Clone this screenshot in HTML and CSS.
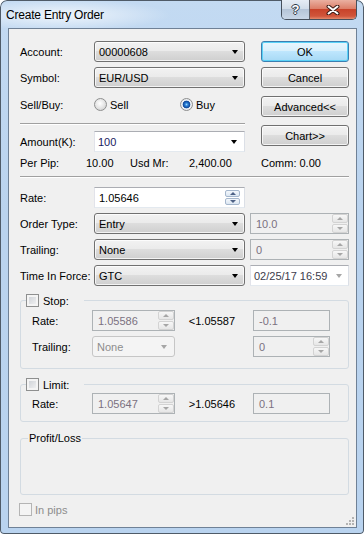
FILE: index.html
```html
<!DOCTYPE html>
<html lang="en">

<head>
    <meta charset="UTF-8" />
    <title>Create Entry Order</title>
    <link rel="stylesheet" href="styles.css">
</head>

<body>
    <div class="window">
        <div class="titlebar">
            <span class="title">Create Entry Order</span>
            <div class="caption">
                <div class="cap help">?</div>
                <div class="cap close">
                    <svg width="14" height="10" viewBox="0 0 14 10">
                        <path d="M2.5 1.5 L11.5 8.5 M11.5 1.5 L2.5 8.5" stroke="#3b1d17" stroke-width="4" stroke-linecap="round" />
                        <path d="M2.5 1.5 L11.5 8.5 M11.5 1.5 L2.5 8.5" stroke="#fff" stroke-width="2" stroke-linecap="round" />
                    </svg>
                </div>
            </div>
        </div>

        <div class="client">
            <div class="top">
                <div class="left">
                    <div class="row">
                        <span class="lbl">Account:</span>
                        <div class="combo"><span>00000608</span><i class="arrow"></i></div>
                    </div>
                    <div class="row gap5">
                        <span class="lbl">Symbol:</span>
                        <div class="combo"><span>EUR/USD</span><i class="arrow"></i></div>
                    </div>
                    <div class="row gap6">
                        <span class="lbl">Sell/Buy:</span>
                        <label class="radio sell"><i class="dot"></i>Sell</label>
                        <label class="radio"><i class="dot on"></i>Buy</label>
                    </div>
                    <div class="sep short"></div>
                    <div class="row gap6">
                        <span class="lbl">Amount(K):</span>
                        <div class="edit combo-edit"><span>100</span><i class="arrow"></i></div>
                    </div>
                </div>
                <div class="buttons">
                    <div class="btn default">OK</div>
                    <div class="btn gap5">Cancel</div>
                    <div class="btn gap8">Advanced&lt;&lt;</div>
                    <div class="btn gap8">Chart&gt;&gt;</div>
                </div>
            </div>

            <div class="pips">
                <span>Per Pip:</span>
                <span>10.00</span>
                <span>Usd Mr:</span>
                <span>2,400.00</span>
                <span>Comm: 0.00</span>
            </div>
            <div class="sep"></div>

            <div class="fields">
                <div class="row">
                    <span class="lbl">Rate:</span>
                    <div class="edit rate">
                        <span>1.05646</span>
                        <div class="spin inset"><b><i class="up"></i></b><b><i class="down"></i></b></div>
                    </div>
                </div>
                <div class="row">
                    <span class="lbl">Order Type:</span>
                    <div class="combo"><span>Entry</span><i class="arrow"></i></div>
                    <div class="edit off side">
                        <span>10.0</span>
                        <div class="spin"><b><i class="up"></i></b><b><i class="down"></i></b></div>
                    </div>
                </div>
                <div class="row">
                    <span class="lbl">Trailing:</span>
                    <div class="combo"><span>None</span><i class="arrow"></i></div>
                    <div class="edit off side">
                        <span>0</span>
                        <div class="spin"><b><i class="up"></i></b><b><i class="down"></i></b></div>
                    </div>
                </div>
                <div class="row">
                    <span class="lbl">Time In Force:</span>
                    <div class="combo"><span>GTC</span><i class="arrow"></i></div>
                    <div class="edit side date"><span>02/25/17 16:59</span><i class="arrow grey"></i></div>
                </div>
            </div>

            <fieldset class="group stop">
                <legend class="check-legend"><i class="chk"></i>Stop:</legend>
                <div class="grow">
                    <span>Rate:</span>
                    <div class="edit off small">
                        <span>1.05586</span>
                        <div class="spin"><b><i class="up"></i></b><b><i class="down"></i></b></div>
                    </div>
                    <span class="cmp">&lt;1.05587</span>
                    <div class="edit off small"><span>-0.1</span></div>
                </div>
                <div class="grow gap5">
                    <span>Trailing:</span>
                    <div class="combo-off"><span>None</span><i class="arrow grey"></i></div>
                    <span></span>
                    <div class="edit off small">
                        <span>0</span>
                        <div class="spin"><b><i class="up"></i></b><b><i class="down"></i></b></div>
                    </div>
                </div>
            </fieldset>

            <fieldset class="group limit">
                <legend class="check-legend"><i class="chk"></i>Limit:</legend>
                <div class="grow">
                    <span>Rate:</span>
                    <div class="edit off small">
                        <span>1.05647</span>
                        <div class="spin"><b><i class="up"></i></b><b><i class="down"></i></b></div>
                    </div>
                    <span class="cmp">&gt;1.05646</span>
                    <div class="edit off small"><span>0.1</span></div>
                </div>
            </fieldset>

            <fieldset class="group pl">
                <legend class="pl-legend">Profit/Loss</legend>
                <div class="pl-body"></div>
            </fieldset>

            <label class="inpips"><i class="chk dis"></i>In pips</label>

            <svg class="grip" width="9" height="9" viewBox="0 0 9 9">
                <rect x="7" y="1" width="2" height="2" fill="#b3b3b3" />
                <rect x="4" y="4" width="2" height="2" fill="#b3b3b3" />
                <rect x="7" y="4" width="2" height="2" fill="#b3b3b3" />
                <rect x="1" y="7" width="2" height="2" fill="#b3b3b3" />
                <rect x="4" y="7" width="2" height="2" fill="#b3b3b3" />
                <rect x="7" y="7" width="2" height="2" fill="#b3b3b3" />
            </svg>
        </div>
    </div>
</body>

</html>
```

FILE: styles.css
```css
* {
    margin: 0;
    padding: 0;
    box-sizing: border-box;
}

body {
    font-family: "Liberation Sans", Arial, sans-serif;
    font-size: 11px;
    color: #000;
    background: #fff;
}

/* Window frame */
.window {
    width: 364px;
    height: 534px;
    display: flex;
    flex-direction: column;
    border-radius: 7px 7px 4px 4px;
    background:
        radial-gradient(ellipse 110px 16px at 60px 15px, rgba(255, 255, 255, 0.75), rgba(255, 255, 255, 0) 100%),
        linear-gradient(#c3daf2, #bad3ee 40%, #b9d3ef);
    box-shadow: inset 0 0 0 1px #4f5b68;
}

.titlebar {
    height: 28px;
    display: flex;
    justify-content: space-between;
    align-items: flex-start;
    padding: 0 7px 0 6px;
}

.title {
    margin-top: 8px;
    font-size: 12px;
    line-height: 14px;
    letter-spacing: -0.2px;
}

.caption {
    display: flex;
    height: 20px;
    border: 1px solid #46505c;
    border-top: none;
    border-radius: 0 0 5px 5px;
    overflow: hidden;
}

.cap {
    height: 19px;
    display: flex;
    align-items: center;
    justify-content: center;
}

.help {
    width: 28px;
    border-right: 1px solid #5d5f66;
    background: linear-gradient(#e6edf5, #d2dde9 45%, #b5c5d8 50%, #c9d7e7);
    color: #fff;
    font-weight: bold;
    font-size: 13px;
    text-shadow: 1px 0 0 #2e3a48, -1px 0 0 #2e3a48, 0 1px 0 #2e3a48, 0 -1px 0 #2e3a48;
}

.close {
    width: 46px;
    background: linear-gradient(#eab0a1, #dc7f69 45%, #c8432a 50%, #d0553b 85%, #e48a6c);
}

/* Client area */
.client {
    flex: 1;
    position: relative;
    margin: 0 7px 6px 8px;
    border: 1px solid #6f8196;
    background: #f0f0f0;
    padding: 12px 7px 0 11px;
}

.top {
    display: flex;
    gap: 16px;
}

.left {
    width: 225px;
}

.buttons {
    width: 88px;
    display: flex;
    flex-direction: column;
}

.row {
    display: flex;
    align-items: center;
    height: 21px;
}

.gap5 {
    margin-top: 5px;
}

.gap6 {
    margin-top: 6px;
}

.gap8 {
    margin-top: 8px;
}

.lbl {
    width: 74px;
    flex-shrink: 0;
}

/* Buttons */
.btn {
    height: 21px;
    display: flex;
    align-items: center;
    justify-content: center;
    border: 1px solid #707070;
    border-radius: 3px;
    background: linear-gradient(#f2f2f2, #ebebeb 45%, #dddddd 50%, #cfcfcf);
    box-shadow: inset 0 0 0 1px rgba(255, 255, 255, 0.75);
}

.btn.default {
    border-color: #3c7fb1;
    background: linear-gradient(#eaf6fd, #d9f0fc 45%, #bee6fd 50%, #a7d9f5);
    box-shadow: inset 0 0 0 1px #5ad2f7;
}

/* Combo boxes */
.combo {
    width: 151px;
    height: 21px;
    flex-shrink: 0;
    display: flex;
    align-items: center;
    justify-content: space-between;
    padding: 0 6px 0 4px;
    border: 1px solid #707070;
    border-radius: 3px;
    background: linear-gradient(#f2f2f2, #ebebeb 45%, #dddddd 50%, #cfcfcf);
    box-shadow: inset 0 0 0 1px rgba(255, 255, 255, 0.75);
}

.arrow {
    width: 0;
    height: 0;
    border-left: 3.5px solid transparent;
    border-right: 3.5px solid transparent;
    border-top: 4px solid #000;
}

.arrow.grey {
    border-top-color: #a6a6a6;
}

/* Edit boxes */
.edit {
    height: 21px;
    flex-shrink: 0;
    display: flex;
    align-items: center;
    justify-content: space-between;
    padding-left: 4px;
    border: 1px solid;
    border-color: #abadb3 #dbdfe6 #e3e9ef #e2e3ea;
    background: #fff;
}

.combo-edit {
    width: 151px;
    padding: 0 7px 0 3px;
    color: #1a1a60;
}

.rate {
    width: 151px;
    padding-right: 4px;
}

.side {
    width: 99px;
    margin-left: 5px;
}

.edit.off {
    background: #f0f0f0;
    border-color: #adb2b5;
    color: #7b7080;
    padding-left: 5px;
}

.edit.small {
    width: 83px;
}

.grow .edit.small:last-child {
    width: 77px;
}

.date {
    color: #3c3c4c;
    padding: 0 6px 0 3px;
}

/* Spin buttons */
.spin {
    align-self: stretch;
    width: 16px;
    display: flex;
    flex-direction: column;
    gap: 1px;
}

.spin b {
    flex: 1;
    display: flex;
    align-items: center;
    justify-content: center;
    border: 1px solid #d3d3d3;
    border-radius: 2px;
    background: linear-gradient(#f7f7f7, #e6e6e6);
}

.spin.inset {
    align-self: center;
    width: 15px;
    height: 15px;
}

.spin.inset b {
    border-color: #a5b7cd;
    background: linear-gradient(#f4f8fc, #dbe6f2);
}

.up,
.down {
    width: 0;
    height: 0;
    border-left: 3px solid transparent;
    border-right: 3px solid transparent;
}

.up {
    border-bottom: 3px solid #a6a6a6;
}

.down {
    border-top: 3px solid #a6a6a6;
}

.inset .up {
    border-bottom-color: #4d6185;
}

.inset .down {
    border-top-color: #4d6185;
}

/* Radios */
.radio {
    display: flex;
    align-items: center;
    gap: 3px;
}

.radio.sell {
    width: 86px;
}

.dot {
    width: 13px;
    height: 13px;
    border-radius: 50%;
    border: 1px solid #8e8f8f;
    background: radial-gradient(circle at 45% 40%, #ffffff, #e8e8e8 45%, #c9c9c9);
}

.dot.on {
    background: radial-gradient(circle at 50% 50%, #9ad8fa 0, #2b7fd8 1.5px, #0d4596 3.5px, #eef1f5 4.2px, #d9dde2);
}

/* Separators */
.sep {
    height: 2px;
    border-top: 1px solid #a0a0a0;
    border-bottom: 1px solid #fff;
}

.sep.short {
    margin-top: 8px;
    width: 225px;
}

.pips {
    display: grid;
    grid-template-columns: 66px 44px 59px 72px auto;
    align-items: center;
    height: 22px;
}

.pips + .sep {
    margin-top: 2px;
}

.fields {
    margin-top: 9px;
    display: flex;
    flex-direction: column;
    gap: 5px;
}

/* Group boxes */
.group {
    border: 1px solid #d3dbe2;
    border-radius: 3px;
    padding: 3px 0 11px 11px;
    margin-top: 8px;
}

.limit {
    margin-top: 9px;
    padding: 2px 0 7px 11px;
}

.pl {
    margin-top: 10px;
    padding: 0 0 0 11px;
}

.pl-body {
    height: 49px;
}

.check-legend {
    display: flex;
    align-items: center;
    gap: 4px;
    height: 13px;
    width: 58px;
    margin-left: -6px;
}

.pl-legend {
    height: 13px;
    line-height: 13px;
    padding: 0 1px;
    margin-left: -4px;
}

.chk {
    width: 13px;
    height: 13px;
    flex-shrink: 0;
    border: 1px solid #8e8f8f;
    background: linear-gradient(135deg, #c9cdd3, #f6f6f6);
    box-shadow: inset 0 0 0 2px #f4f4f4;
}

.chk.dis {
    border-color: #b4b4b4;
    background: #f4f4f4;
    box-shadow: none;
}

.grow {
    display: grid;
    grid-template-columns: 60px 83px 78px 77px;
    align-items: center;
    height: 21px;
}

.cmp {
    text-align: right;
    padding-right: 18px;
}

.combo-off {
    width: 83px;
    height: 21px;
    display: flex;
    align-items: center;
    justify-content: space-between;
    padding: 0 7px 0 4px;
    border: 1px solid #c6c6c6;
    border-radius: 3px;
    background: #f4f4f4;
    color: #8d8d8d;
}

.inpips {
    margin-top: 8px;
    margin-left: -1px;
    height: 13px;
    display: flex;
    align-items: center;
    gap: 3px;
    color: #8d8d8d;
}

.grip {
    position: absolute;
    right: 2px;
    bottom: 2px;
}
```
